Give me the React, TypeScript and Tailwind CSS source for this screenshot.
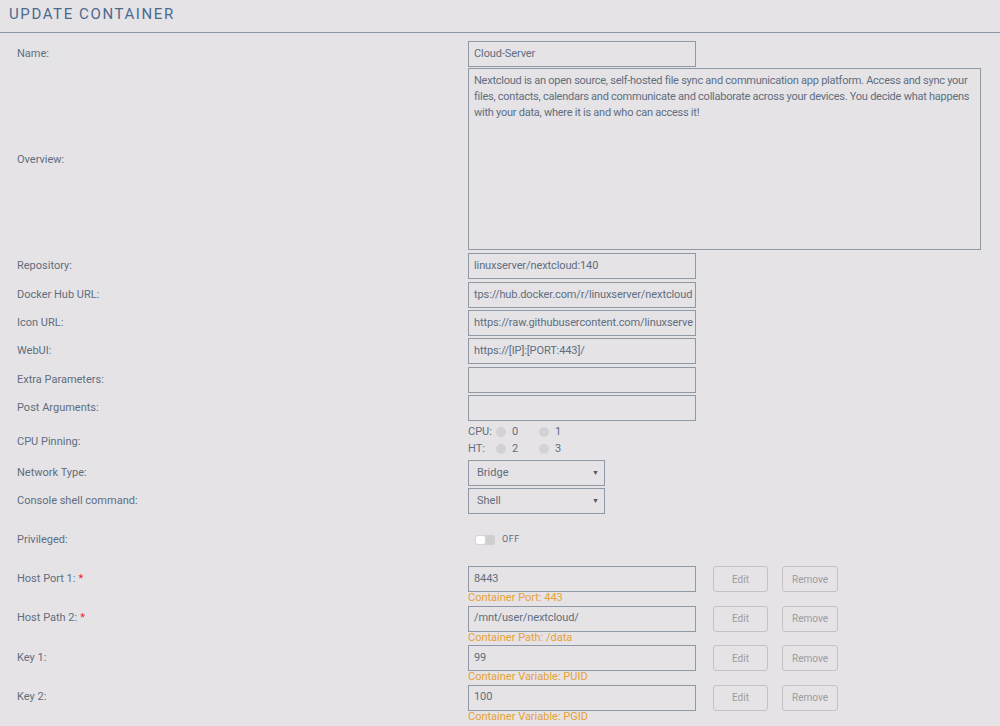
const font = { fontFamily: '"Roboto", "Liberation Sans", sans-serif' };

function Field({ value = '', w = 'w-[228px]' }: { value?: string; w?: string }) {
  return (
    <div className={`${w} h-[26px] border border-[#8f99a6] px-[5px] flex items-center text-[11px] tracking-[-0.1px] text-[#606e7f] overflow-hidden whitespace-nowrap`}>
      {value}
    </div>
  );
}

function Select({ value }: { value: string }) {
  return (
    <div className="w-[137px] h-[26px] border border-[#8f99a6] pl-[8px] pr-[5px] flex items-center justify-between text-[11px] text-[#606e7f]">
      <span>{value}</span>
      <span className="text-[7px] text-[#4d5866]">▼</span>
    </div>
  );
}

function Label({ text, req }: { text: string; req?: boolean }) {
  return (
    <div className="w-[468px] shrink-0 pl-[17px] text-[11px] text-[#606e7f]">
      {text}
      {req && <span className="text-[#e5262c] ml-[3px]">*</span>}
    </div>
  );
}

function Row({ label, value, h }: { label: string; value?: string; h: string }) {
  return (
    <div className={`flex items-start ${h}`}>
      <div className="h-[26px] flex items-center"><Label text={label} /></div>
      <Field value={value} />
    </div>
  );
}

function Btn({ text, w }: { text: string; w: string }) {
  return (
    <div className={`${w} h-[26px] border border-[#c8c1c1] rounded-[3px] flex items-center justify-center text-[10px] text-[#9c9c9f]`}>
      {text}
    </div>
  );
}

function ConfigRow({ label, value, note, req }: { label: string; value: string; note: string; req?: boolean }) {
  return (
    <div className="flex items-start h-[39.5px]">
      <div className="h-[26px] flex items-center"><Label text={label} req={req} /></div>
      <div>
        <div className="flex items-center">
          <Field value={value} />
          <div className="ml-[17px]"><Btn text="Edit" w="w-[55px]" /></div>
          <div className="ml-[14px]"><Btn text="Remove" w="w-[56px]" /></div>
        </div>
        <div className="text-[11px] text-[#e8a134] leading-[12px]">{note}</div>
      </div>
    </div>
  );
}

function Dot() {
  return <span className="inline-block w-[10px] h-[10px] rounded-full bg-[#d2d1d4]" />;
}

export default function App() {
  return (
    <div className="min-h-[726px] w-[1000px] bg-[#e5e3e6] overflow-hidden" style={font}>
      <div className="h-[33px] border-b border-[#8a97a8] flex items-center pl-[9px]">
        <h1 className="text-[15px] tracking-[1.6px] text-[#4c6a90] leading-none mt-[-4px]">UPDATE CONTAINER</h1>
      </div>

      <div className="pt-[8px]">
        <Row label="Name:" value="Cloud-Server" h="h-[27px]" />

        <div className="flex items-center h-[185px]">
          <Label text="Overview:" />
          <div className="self-start w-[513px] h-[182px] border border-[#8f99a6] px-[5px] py-[4px] text-[11px] tracking-[-0.25px] leading-[16px] text-[#606e7f]">
            Nextcloud is an open source, self-hosted file sync and communication app platform. Access and sync your files, contacts, calendars and communicate and collaborate across your devices. You decide what happens with your data, where it is and who can access it!
          </div>
        </div>

        <Row label="Repository:" value="linuxserver/nextcloud:140" h="h-[29px]" />
        <Row label="Docker Hub URL:" value="tps://hub.docker.com/r/linuxserver/nextcloud" h="h-[28px]" />
        <Row label="Icon URL:" value="https://raw.githubusercontent.com/linuxserve" h="h-[28px]" />
        <Row label="WebUI:" value="https://[IP]:[PORT:443]/" h="h-[29px]" />
        <Row label="Extra Parameters:" value="" h="h-[28px]" />
        <Row label="Post Arguments:" value="" h="h-[29px]" />

        <div className="flex items-center h-[36px]">
          <Label text="CPU Pinning:" />
          <div className="text-[11px] text-[#606e7f] leading-[17px] mt-[-4px]">
            <div className="flex items-center">
              <span className="w-[28px]">CPU:</span>
              <Dot />
              <span className="ml-[6px] w-[27px]">0</span>
              <Dot />
              <span className="ml-[6px]">1</span>
            </div>
            <div className="flex items-center">
              <span className="w-[28px]">HT:</span>
              <Dot />
              <span className="ml-[6px] w-[27px]">2</span>
              <Dot />
              <span className="ml-[6px]">3</span>
            </div>
          </div>
        </div>

        <div className="flex items-start h-[28px]">
          <div className="h-[26px] flex items-center"><Label text="Network Type:" /></div>
          <Select value="Bridge" />
        </div>
        <div className="flex items-start h-[28px]">
          <div className="h-[26px] flex items-center"><Label text="Console shell command:" /></div>
          <Select value="Shell" />
        </div>

        <div className="flex items-center h-[48px]">
          <Label text="Privileged:" />
          <div className="flex items-center ml-[7px]">
            <div className="w-[20px] h-[10px] rounded-[3px] bg-[#cfcfd1] relative">
              <div className="absolute left-0 top-0 w-[11px] h-[10px] rounded-[3px] bg-white border border-[#d6d6d6]" />
            </div>
            <span className="ml-[7px] text-[9px] tracking-[0.5px] text-[#606e7f]">OFF</span>
          </div>
        </div>

        <div className="pt-[2px]">
          <ConfigRow label="Host Port 1:" req value="8443" note="Container Port: 443" />
          <ConfigRow label="Host Path 2:" req value="/mnt/user/nextcloud/" note="Container Path: /data" />
          <ConfigRow label="Key 1:" value="99" note="Container Variable: PUID" />
          <ConfigRow label="Key 2:" value="100" note="Container Variable: PGID" />
        </div>
      </div>
    </div>
  );
}
